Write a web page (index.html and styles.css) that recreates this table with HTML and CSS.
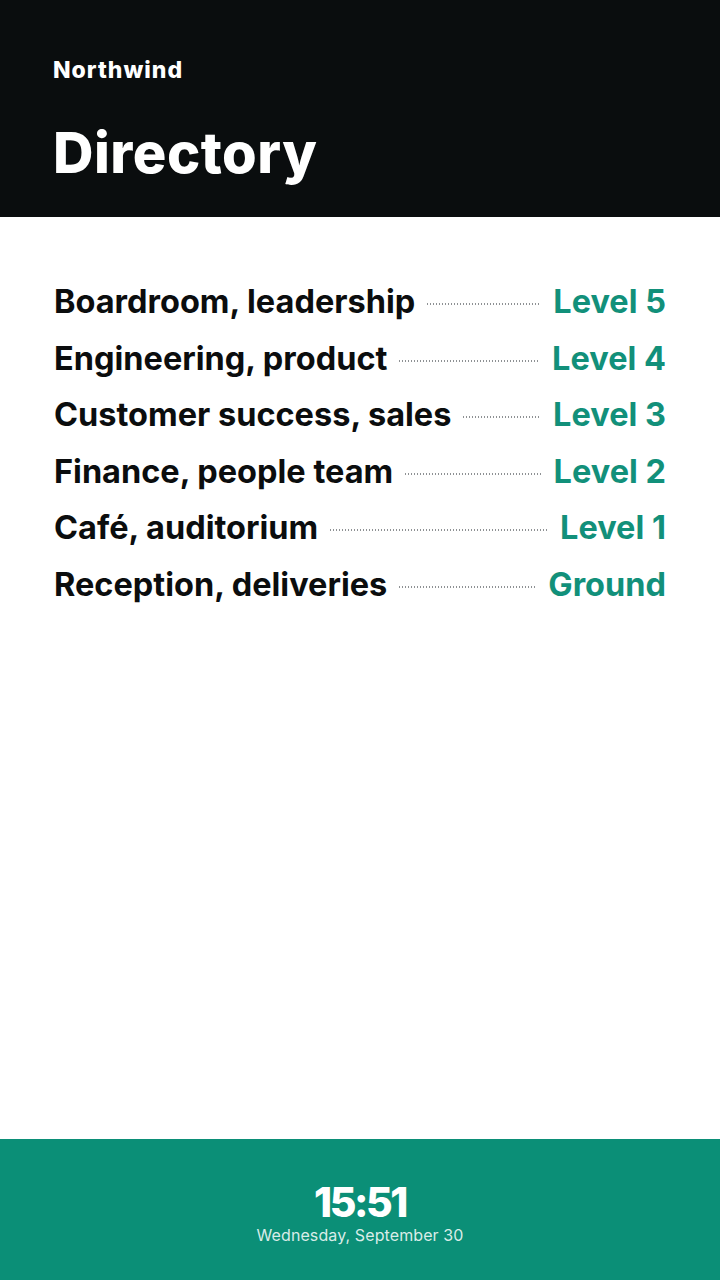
FILE: index.html
```html
<!DOCTYPE html>
<html lang="en">
<head>
  <meta charset="UTF-8" />
  <meta name="viewport" content="width=device-width, initial-scale=1.0"/>
  <title>Northwind Directory</title>
  <link rel="stylesheet" href="styles.css">
</head>
<body>
  <div class="screen">
    <header class="top">
      <div class="brand">Northwind</div>
      <h1>Directory</h1>
    </header>

    <main class="list">
      <div class="row"><span class="name">Boardroom, leadership</span><span class="dots"></span><span class="floor">Level 5</span></div>
      <div class="row"><span class="name">Engineering, product</span><span class="dots"></span><span class="floor">Level 4</span></div>
      <div class="row"><span class="name">Customer success, sales</span><span class="dots"></span><span class="floor">Level 3</span></div>
      <div class="row"><span class="name">Finance, people team</span><span class="dots"></span><span class="floor">Level 2</span></div>
      <div class="row"><span class="name">Café, auditorium</span><span class="dots"></span><span class="floor">Level 1</span></div>
      <div class="row"><span class="name">Reception, deliveries</span><span class="dots"></span><span class="floor">Ground</span></div>
    </main>

    <footer class="bottom">
      <div class="time">15:51</div>
      <div class="date">Wednesday, September 30</div>
    </footer>
  </div>
</body>
</html>
```

FILE: styles.css
```css
html, body {
  margin: 0;
  height: 100%;
}
body {
  font-family: 'Inter', 'Liberation Sans', sans-serif;
  background: #fff;
  color: #0b0d0e;
}
.screen {
  display: flex;
  flex-direction: column;
  height: 1280px;
}
.top {
  background: #0a0d0e;
  color: #fff;
  height: 217px;
  box-sizing: border-box;
  padding: 56px 53px 0;
}
.brand {
  font-size: 23px;
  font-weight: 800;
  letter-spacing: 1px;
  line-height: 28px;
}
h1 {
  margin: 36px 0 0;
  font-size: 56px;
  font-weight: 800;
  letter-spacing: 0.5px;
  line-height: 66px;
}
.list {
  flex: 1;
  padding: 65px 54px 0;
}
.row {
  display: flex;
  align-items: baseline;
  gap: 12px;
  height: 56.6px;
  font-size: 32.5px;
  font-weight: 700;
  line-height: 40px;
}
.name {
  white-space: nowrap;
}
.dots {
  flex: 1;
  height: 2px;
  background: repeating-linear-gradient(90deg, #8e9194 0 1px, transparent 1px 3px);
  transform: translateY(-8px);
}
.floor {
  color: #12907a;
  white-space: nowrap;
}
.bottom {
  background: #0b8f77;
  color: #fff;
  height: 141px;
  display: flex;
  flex-direction: column;
  align-items: center;
  padding-top: 41px;
  box-sizing: border-box;
}
.time {
  font-size: 41px;
  font-weight: 800;
  letter-spacing: -0.06em;
  line-height: 44px;
}
.date {
  font-size: 16px;
  letter-spacing: 0.1px;
  color: rgba(255,255,255,0.85);
  margin-top: 1px;
}
```
